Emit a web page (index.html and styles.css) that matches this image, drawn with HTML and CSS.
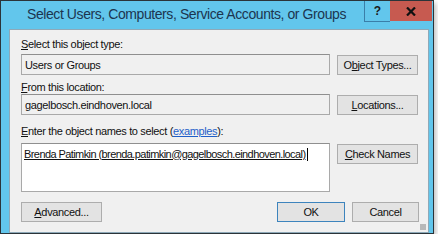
FILE: index.html
```html
<!DOCTYPE html>
<html lang="en">
<head>
  <meta charset="UTF-8">
  <title>Select Users, Computers, Service Accounts, or Groups</title>
  <link rel="stylesheet" href="styles.css">
</head>
<body>

<div class="window">
  <div class="titlebar">
    <span class="title">Select Users, Computers, Service Accounts, or Groups</span>
    <div class="caption-buttons">
      <div class="cap-btn help">?</div>
      <div class="cap-btn close">
        <svg width="10" height="9" viewBox="0 0 10 9"><path d="M1 0.5 L9 8.5 M9 0.5 L1 8.5" stroke="#111" stroke-width="2.2"/></svg>
      </div>
    </div>
  </div>

  <div class="client">
    <div class="label"><u>S</u>elect this object type:</div>
    <div class="row">
      <div class="field">Users or Groups</div>
      <button class="btn">O<u>b</u>ject Types...</button>
    </div>

    <div class="label second"><u>F</u>rom this location:</div>
    <div class="row">
      <div class="field">gagelbosch.eindhoven.local</div>
      <button class="btn"><u>L</u>ocations...</button>
    </div>

    <div class="label third"><u>E</u>nter the object names to select (<span class="link">examples</span>):</div>
    <div class="row tall">
      <div class="names"><u>Brenda Patimkin (brenda.patimkin@gagelbosch.eindhoven.local)</u><span class="caret"></span></div>
      <button class="btn"><u>C</u>heck Names</button>
    </div>

    <div class="footer">
      <button class="btn"><u>A</u>dvanced...</button>
      <div class="footer-right">
        <button class="btn default">OK</button>
        <button class="btn">Cancel</button>
      </div>
    </div>
    <div class="grip"></div>
  </div>
</div>

</body>
</html>
```

FILE: styles.css
```css
body {
  margin: 0;
  padding: 0;
  background-color: #ffffff;
  font-family: 'Liberation Sans', Arial, sans-serif;
}

/* Window frame */
.window {
  width: 420px;
  height: 232px;
  background-color: #62c6ec;
  border: 1px solid #2b3439;
  box-shadow: 2px 3px 5px rgba(0, 0, 0, 0.25);
  display: flex;
  flex-direction: column;
  padding: 0 4px 0 8px;
}

.titlebar {
  height: 28px;
  display: flex;
  align-items: flex-start;
  justify-content: space-between;
  margin-right: -3px;
}

.title {
  font-family: 'Liberation Sans', Arial, sans-serif;
  font-size: 14px;
  color: #1c3550;
  margin-left: 18px;
  margin-top: 5px;
  letter-spacing: -0.42px;
  white-space: nowrap;
}

.caption-buttons {
  display: flex;
  flex-shrink: 0;
}

.cap-btn {
  height: 20px;
  display: flex;
  align-items: center;
  justify-content: center;
}

.help {
  width: 25px;
  font-size: 12px;
  font-weight: bold;
  color: #1a1a1a;
  border-left: 1px solid #3a7ea8;
  border-bottom: 1px solid #3a7ea8;
}

.close {
  width: 42px;
  background-color: #c75a50;
}

/* Client area */
.client {
  position: relative;
  background-color: #f0f0f0;
  border: 1px solid #8ea9b8;
  height: 199px;
  padding: 7px 9px 0 11px;
  font-size: 11px;
  color: #111;
  letter-spacing: -0.35px;
}

.label {
  height: 15px;
  line-height: 15px;
  margin-bottom: 2px;
  white-space: nowrap;
}

.label.second {
  margin-top: 5px;
  margin-bottom: 0;
  height: 14px;
}

.label.third {
  margin-top: 9px;
  height: 14px;
  margin-bottom: 5px;
}

.link {
  color: #1f5fc9;
  text-decoration: underline;
}

.row {
  display: flex;
  gap: 7px;
  align-items: flex-start;
}

.field {
  width: 309px;
  height: 21px;
  box-sizing: border-box;
  border: 1px solid #a9a9a9;
  border-top-color: #8f8f8f;
  background-color: #f0f0f0;
  padding: 3px 3px;
  line-height: 14px;
}

.names {
  width: 309px;
  height: 49px;
  box-sizing: border-box;
  border: 1px solid #a9a9a9;
  border-top-color: #8f8f8f;
  background-color: #ffffff;
  padding: 3px 2px;
  line-height: 14px;
  letter-spacing: -0.58px;
  white-space: nowrap;
  overflow: hidden;
}

.caret {
  display: inline-block;
  width: 1px;
  height: 13px;
  background-color: #000;
  vertical-align: -3px;
  margin-left: 1px;
}

.btn {
  width: 81px;
  height: 20px;
  margin-top: 1px;
  padding: 0;
  box-sizing: border-box;
  border: 1px solid #adadad;
  background-color: #e3e3e3;
  font-family: 'Liberation Sans', Arial, sans-serif;
  font-size: 11px;
  letter-spacing: -0.35px;
  color: #111;
}

.btn.default {
  border-color: #3d84bd;
  width: 68px;
}

.footer {
  display: flex;
  justify-content: space-between;
  margin-top: 9px;
}

.footer-right {
  display: flex;
  gap: 7px;
}

.footer-right .btn:last-child {
  width: 67px;
}

/* Resize grip */
.grip {
  position: absolute;
  right: 2px;
  bottom: 2px;
  width: 6px;
  height: 6px;
  background-image: radial-gradient(circle, #b8b8b8 0.8px, transparent 1px);
  background-size: 2px 2px;
}
```
